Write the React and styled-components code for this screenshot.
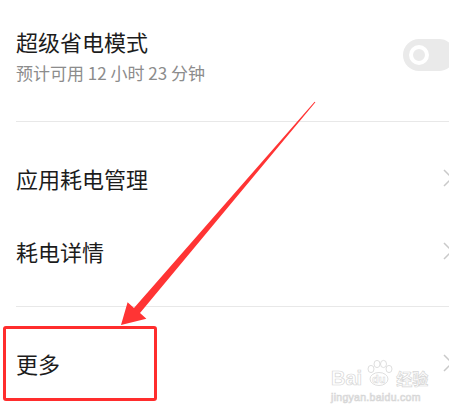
import React from "react";
import styled, { createGlobalStyle } from "styled-components";

const GlobalStyle = createGlobalStyle`
  html, body {
    margin: 0;
    padding: 0;
    background: #ffffff;
    overflow: hidden;
  }
  body {
    font-family: "Noto Sans CJK SC", "Noto Sans", sans-serif;
  }
`;

const rows = ["应用耗电管理", "耗电详情"];

const App = () => {
  return (
    <>
      <GlobalStyle />
      <Page>
        <TopItem>
          <TextBlock>
            <Title>超级省电模式</Title>
            <SubTitle>预计可用 12 小时 23 分钟</SubTitle>
          </TextBlock>
          <Toggle>
            <Knob />
          </Toggle>
        </TopItem>
        <Divider />
        <Section>
          {rows.map((label) => (
            <Row key={label}>
              <Title>{label}</Title>
              <Chevron />
            </Row>
          ))}
        </Section>
        <Divider />
        <Section $last>
          <Row>
            <Title>更多</Title>
            <Chevron />
          </Row>
        </Section>

        <Highlight />
        <Arrow viewBox="0 0 449 414">
          <polygon points="314.6,101.7 134,307.9 127.6,302.3 121,325 146.4,318.7 140,313.1 315.4,102.3" />
        </Arrow>
        <Watermark>
          <MarkTop>
            <MarkBig>Bai</MarkBig>
            <Paw viewBox="0 0 34 28">
              <ellipse cx="17" cy="20" rx="9" ry="6.5" />
              <ellipse cx="9" cy="10" rx="3" ry="3.6" />
              <ellipse cx="15" cy="5" rx="3" ry="3.6" />
              <ellipse cx="21.5" cy="5" rx="3" ry="3.6" />
              <ellipse cx="27" cy="10" rx="3" ry="3.6" />
              <text x="10" y="24">du</text>
            </Paw>
            <MarkCn>经验</MarkCn>
          </MarkTop>
          <MarkUrl>jingyan.baidu.com</MarkUrl>
        </Watermark>
      </Page>
    </>
  );
};

export default App;

const Chevron = () => (
  <ChevronSvg viewBox="0 0 10 18">
    <polyline points="1,1 9,9 1,17" />
  </ChevronSvg>
);

const Page = styled.div`
  position: relative;
  width: 471px;
  height: 414px;
`;

const TopItem = styled.div`
  display: flex;
  align-items: center;
  justify-content: space-between;
  padding: 26px 16px 37px 16px;
`;

const TextBlock = styled.div`
  display: flex;
  flex-direction: column;
  gap: 6px;
`;

const Title = styled.div`
  font-size: 22px;
  line-height: 30px;
  color: #1c1c1c;
`;

const SubTitle = styled.div`
  font-size: 17px;
  line-height: 22px;
  color: #8c8c8c;
`;

const Toggle = styled.div`
  display: flex;
  align-items: center;
  width: 52px;
  height: 32px;
  padding-left: 6px;
  box-sizing: border-box;
  border-radius: 16px;
  background: #eaeaea;
`;

const Knob = styled.div`
  width: 20px;
  height: 20px;
  box-sizing: border-box;
  border-radius: 50%;
  border: 4.5px solid #ffffff;
`;

const Divider = styled.div`
  margin-left: 16px;
  height: 1px;
  background: #e8e8e8;
`;

const Section = styled.div`
  padding: 19px 0 ${(p) => (p.$last ? "0" : "19px")} 0;
`;

const Row = styled.div`
  display: flex;
  align-items: center;
  justify-content: space-between;
  height: 73px;
  padding: 0 18px 0 16px;
`;

const ChevronSvg = styled.svg`
  width: 10px;
  height: 18px;
  fill: none;
  stroke: #c9c9c9;
  stroke-width: 1.5;
`;

const Highlight = styled.div`
  position: absolute;
  left: 3px;
  top: 326px;
  width: 154px;
  height: 75px;
  box-sizing: border-box;
  border: 3px solid #ff2d2d;
  border-radius: 3px;
`;

const Arrow = styled.svg`
  position: absolute;
  left: 0;
  top: 0;
  width: 449px;
  height: 414px;
  fill: #ff3434;
`;

const Watermark = styled.div`
  position: absolute;
  left: 331px;
  top: 357px;
  display: flex;
  flex-direction: column;
  align-items: flex-start;
  font-family: "Liberation Sans", sans-serif;
  color: transparent;
  -webkit-text-stroke: 0.7px #d6d6d6;
`;

const MarkTop = styled.div`
  display: flex;
  align-items: flex-end;
  height: 30px;
`;

const MarkBig = styled.span`
  font-size: 20px;
  line-height: 17px;
  font-weight: bold;
`;

const Paw = styled.svg`
  width: 34px;
  height: 28px;
  fill: none;
  stroke: #d6d6d6;
  stroke-width: 0.8;

  text {
    font-size: 11px;
    font-weight: bold;
    fill: none;
    stroke: #d6d6d6;
    stroke-width: 0.5;
  }
`;

const MarkCn = styled.span`
  font-family: "Noto Sans CJK SC", sans-serif;
  font-size: 16px;
  line-height: 18px;
  font-weight: bold;
`;

const MarkUrl = styled.span`
  margin-top: 5px;
  font-size: 10.5px;
  line-height: 10px;
  letter-spacing: 0.3px;
`;
